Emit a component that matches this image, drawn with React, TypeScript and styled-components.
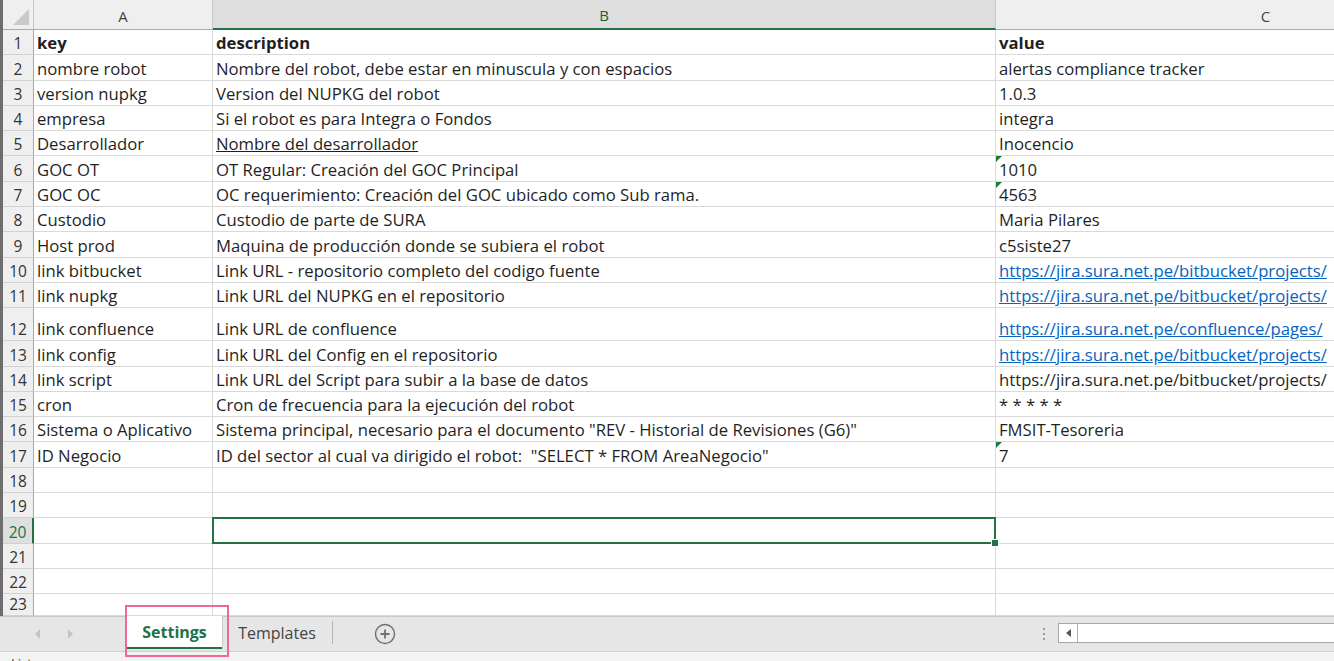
import React from "react";
import styled, { createGlobalStyle, css } from "styled-components";

const Global = createGlobalStyle`
  html, body { margin: 0; padding: 0; overflow: hidden; background: #fff; }
  #root { width: 1334px; height: 661px; }
`;

const FONT = `"Open Sans", "Lato", "Liberation Sans", sans-serif`;
const COLS = "31px 179px 783px 540px";
const GRID = "#d9d9d9";
const GREEN = "#217346";

const Window = styled.div`
  width: 1334px;
  height: 661px;
  display: flex;
  flex-direction: column;
  font-family: ${FONT};
  overflow: hidden;
  position: relative;
`;

const Sheet = styled.div`
  flex: 1;
  min-height: 0;
  display: flex;
  flex-direction: column;
  overflow: hidden;
  border-left: 3px solid #6d6d6d;
  background: #fff;
`;

const Row = styled.div<{ $h: number }>`
  display: grid;
  grid-template-columns: ${COLS};
  height: ${(p) => p.$h}px;
  flex: none;
`;

const Corner = styled.div`
  background: #efefef;
  border-right: 1px solid #c6c6c6;
  border-bottom: 1px solid #a9a9a9;
  position: relative;
  &::after {
    content: "";
    position: absolute;
    right: 4px;
    bottom: 4px;
    width: 0;
    height: 0;
    border-left: 16px solid transparent;
    border-bottom: 16px solid #c9c9c9;
  }
`;

const ColHead = styled.div<{ $active?: boolean }>`
  background: ${(p) => (p.$active ? "#dedede" : "#efefef")};
  border-right: 1px solid #c6c6c6;
  border-bottom: ${(p) => (p.$active ? `2px solid ${GREEN}` : "1px solid #a9a9a9")};
  display: flex;
  align-items: center;
  justify-content: center;
  font-size: 15px;
  color: ${(p) => (p.$active ? "#1d5a38" : "#444")};
  padding-top: 2px;
  box-sizing: border-box;
`;

const RowHead = styled.div<{ $active?: boolean }>`
  background: ${(p) => (p.$active ? "#dedede" : "#efefef")};
  border-right: ${(p) => (p.$active ? `2px solid ${GREEN}` : "1px solid #a9a9a9")};
  border-bottom: 1px solid #d2d2d2;
  display: flex;
  align-items: flex-end;
  justify-content: center;
  padding-bottom: 1px;
  box-sizing: border-box;
  font-size: 15.5px;
  line-height: 20px;
  color: ${(p) => (p.$active ? GREEN : "#333")};
`;

const Cell = styled.div<{ $bold?: boolean; $selected?: boolean; $flag?: boolean }>`
  position: relative;
  border-right: 1px solid ${GRID};
  border-bottom: 1px solid ${GRID};
  box-sizing: border-box;
  display: flex;
  align-items: flex-end;
  padding: 0 0 1px 3px;
  font-size: 16.7px;
  line-height: 21px;
  color: #1f1f1f;
  white-space: pre;
  overflow: visible;
  font-weight: ${(p) => (p.$bold ? 700 : 400)};
  ${(p) =>
    p.$flag &&
    css`
      &::before {
        content: "";
        position: absolute;
        left: 0;
        top: 0;
        border-top: 6px solid #1e7a3c;
        border-right: 6px solid transparent;
      }
    `}
  ${(p) =>
    p.$selected &&
    css`
      &::after {
        content: "";
        position: absolute;
        left: -1px;
        top: -1px;
        right: -1px;
        bottom: -1px;
        border: 2px solid ${GREEN};
        z-index: 2;
      }
    `}
`;

const Handle = styled.span`
  position: absolute;
  right: -4px;
  bottom: -4px;
  width: 6px;
  height: 6px;
  background: ${GREEN};
  border: 1px solid #fff;
  z-index: 3;
`;

const Link = styled.span`
  color: #0563c1;
  text-decoration: underline;
`;

const Under = styled.span`
  text-decoration: underline;
`;

const TabBar = styled.div`
  height: 35px;
  flex: none;
  background: #e6e6e6;
  border-top: 1px solid #c8c8c8;
  display: flex;
  align-items: stretch;
  box-sizing: border-box;
`;

const NavArrows = styled.div`
  width: 127px;
  display: flex;
  align-items: center;
  gap: 28px;
  padding-left: 35px;
  box-sizing: border-box;
`;

const Arrow = styled.span<{ $dir: "l" | "r" }>`
  width: 0;
  height: 0;
  border-top: 5px solid transparent;
  border-bottom: 5px solid transparent;
  ${(p) =>
    p.$dir === "l"
      ? "border-right: 5px solid #c4c4c4;"
      : "border-left: 5px solid #c4c4c4;"}
`;

const Tab = styled.div<{ $active?: boolean }>`
  width: ${(p) => (p.$active ? "95px" : "110px")};
  display: flex;
  align-items: center;
  justify-content: center;
  font-size: 16px;
  box-sizing: border-box;
  margin-bottom: 2px;
  ${(p) =>
    p.$active
      ? css`
          background: #fff;
          color: ${GREEN};
          font-weight: 700;
          border-bottom: 2px solid ${GREEN};
          box-shadow: 1px 0 0 #c9c9c9;
          margin-top: -1px;
        `
      : css`
          color: #444;
        `}
`;

const Sep = styled.div`
  width: 1px;
  background: #b5b5b5;
  margin: 4px 0 7px;
`;

const AddBtn = styled.div`
  width: 104px;
  display: flex;
  align-items: center;
  justify-content: center;
`;

const Spacer = styled.div`
  flex: 1;
`;

const Dots = styled.div`
  width: 24px;
  display: flex;
  flex-direction: column;
  align-items: center;
  justify-content: center;
  gap: 3px;
  margin-right: 2px;
  & > span {
    width: 2px;
    height: 2px;
    background: #9a9a9a;
  }
`;

const HScroll = styled.div`
  width: 276px;
  margin: 6px 0 8px;
  border: 1px solid #a6a6a6;
  border-right: none;
  background: #fff;
  display: flex;
  box-sizing: border-box;
`;

const ScrollBtn = styled.div`
  width: 18px;
  border-right: 1px solid #b0b0b0;
  display: flex;
  align-items: center;
  justify-content: center;
  &::before {
    content: "";
    border-top: 4px solid transparent;
    border-bottom: 4px solid transparent;
    border-right: 5px solid #555;
  }
`;

const StatusBar = styled.div`
  height: 10px;
  flex: none;
  background: #f3f3f3;
  border-top: 1px solid #d0d0d0;
  font-size: 13px;
  line-height: 13px;
  color: #444;
  padding: 5px 0 0 11px;
  overflow: hidden;
  box-sizing: border-box;
`;

const Annotation = styled.div`
  position: absolute;
  left: 125px;
  top: 605px;
  width: 104px;
  height: 52px;
  border: 2px solid #ec6a93;
  box-sizing: border-box;
  pointer-events: none;
  z-index: 5;
`;

type V = React.ReactNode;
const rows: { a: V; b: V; c: V; bold?: boolean; flag?: boolean; h?: number }[] = [
  { a: "key", b: "description", c: "value", bold: true },
  { a: "nombre robot", b: "Nombre del robot, debe estar en minuscula y con espacios", c: "alertas compliance tracker" },
  { a: "version nupkg", b: "Version del NUPKG del robot", c: "1.0.3" },
  { a: "empresa", b: "Si el robot es para Integra o Fondos", c: "integra" },
  { a: "Desarrollador", b: <Under>Nombre del desarrollador</Under>, c: "Inocencio" },
  { a: "GOC OT", b: "OT Regular: Creación del GOC Principal", c: "1010", flag: true },
  { a: "GOC OC", b: "OC requerimiento: Creación del GOC ubicado como Sub rama.", c: "4563", flag: true },
  { a: "Custodio", b: "Custodio de parte de SURA", c: "Maria Pilares" },
  { a: "Host prod", b: "Maquina de producción donde se subiera el robot", c: "c5siste27" },
  { a: "link bitbucket", b: "Link URL - repositorio completo del codigo fuente", c: <Link>https://jira.sura.net.pe/bitbucket/projects/</Link> },
  { a: "link nupkg", b: "Link URL del NUPKG en el repositorio", c: <Link>https://jira.sura.net.pe/bitbucket/projects/</Link> },
  { a: "link confluence", b: "Link URL de confluence", c: <Link>https://jira.sura.net.pe/confluence/pages/</Link>, h: 33 },
  { a: "link config", b: "Link URL del Config en el repositorio", c: <Link>https://jira.sura.net.pe/bitbucket/projects/</Link> },
  { a: "link script", b: "Link URL del Script para subir a la base de datos", c: "https://jira.sura.net.pe/bitbucket/projects/" },
  { a: "cron", b: "Cron de frecuencia para la ejecución del robot", c: "* * * * *" },
  { a: "Sistema o Aplicativo", b: "Sistema principal, necesario para el documento \"REV - Historial de Revisiones (G6)\"", c: "FMSIT-Tesoreria" },
  { a: "ID Negocio", b: "ID del sector al cual va dirigido el robot:  \"SELECT * FROM AreaNegocio\"", c: "7", flag: true },
];
for (let i = 18; i <= 22; i++) rows.push({ a: "", b: "", c: "" });
rows.push({ a: "", b: "", c: "", h: 22 });

export default function App() {
  return (
    <>
      <Global />
      <Window>
        <Sheet>
          <Row $h={30}>
            <Corner />
            <ColHead>A</ColHead>
            <ColHead $active>B</ColHead>
            <ColHead>C</ColHead>
          </Row>
          {rows.map((r, i) => {
            const n = i + 1;
            const h = r.h ?? 25.3;
            const sel = n === 20;
            return (
              <Row key={n} $h={h}>
                <RowHead $active={sel}>{n}</RowHead>
                <Cell $bold={r.bold}>{r.a}</Cell>
                <Cell $bold={r.bold} $selected={sel}>
                  {r.b}
                  {sel && <Handle />}
                </Cell>
                <Cell $bold={r.bold} $flag={r.flag}>{r.c}</Cell>
              </Row>
            );
          })}
        </Sheet>
        <TabBar>
          <NavArrows>
            <Arrow $dir="l" />
            <Arrow $dir="r" />
          </NavArrows>
          <Tab $active>Settings</Tab>
          <Tab>Templates</Tab>
          <Sep />
          <AddBtn>
            <svg width="22" height="22" viewBox="0 0 22 22">
              <circle cx="11" cy="11" r="9.5" fill="none" stroke="#6f6f6f" strokeWidth="1.4" />
              <path d="M11 6.5v9M6.5 11h9" stroke="#6f6f6f" strokeWidth="1.8" />
            </svg>
          </AddBtn>
          <Spacer />
          <Dots>
            <span />
            <span />
            <span />
          </Dots>
          <HScroll>
            <ScrollBtn />
          </HScroll>
        </TabBar>
        <StatusBar>Listo</StatusBar>
        <Annotation />
      </Window>
    </>
  );
}
